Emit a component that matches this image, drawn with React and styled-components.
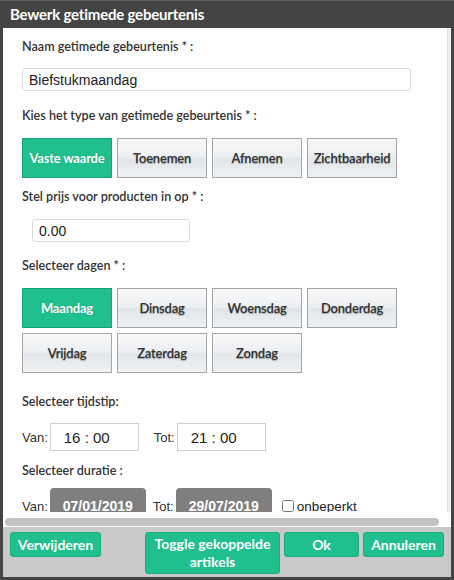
import React from "react";
import styled, { createGlobalStyle } from "styled-components";

const GlobalStyle = createGlobalStyle`
  html, body {
    margin: 0;
    padding: 0;
    background: #444;
  }
  * {
    box-sizing: border-box;
  }
`;

const typeOptions = ["Vaste waarde", "Toenemen", "Afnemen", "Zichtbaarheid"];
const dagen = ["Maandag", "Dinsdag", "Woensdag", "Donderdag", "Vrijdag", "Zaterdag", "Zondag"];

const App = () => {
  return (
    <>
      <GlobalStyle />
      <Dialog>
        <TitleBar>Bewerk getimede gebeurtenis</TitleBar>
        <Body>
          <ScrollRow>
            <Content>
              <Label $top={11}>Naam getimede gebeurtenis * :</Label>
              <TextInput $top={13} $width={389} defaultValue="Biefstukmaandag" />

              <Label $top={17}>Kies het type van getimede gebeurtenis * :</Label>
              <ButtonGrid $top={14}>
                {typeOptions.map((t, i) => (
                  <ToggleKnop key={t} $actief={i === 0}>
                    {t}
                  </ToggleKnop>
                ))}
              </ButtonGrid>

              <Label $top={11}>Stel prijs voor producten in op * :</Label>
              <TextInput $top={14} $width={158} $indent={10} defaultValue="0.00" />

              <Label $top={16}>Selecteer dagen * :</Label>
              <ButtonGrid $top={14}>
                {dagen.map((d, i) => (
                  <ToggleKnop key={d} $actief={i === 0}>
                    {d}
                  </ToggleKnop>
                ))}
              </ButtonGrid>

              <Label $top={21}>Selecteer tijdstip:</Label>
              <TijdRij $top={13}>
                <Klein>Van:</Klein>
                <TijdVeld>16 : 00</TijdVeld>
                <Klein $links={15}>Tot:</Klein>
                <TijdVeld>21 : 00</TijdVeld>
              </TijdRij>

              <Label $top={12}>Selecteer duratie :</Label>
              <DatumRij $top={9}>
                <Klein>Van:</Klein>
                <DatumKnop>07/01/2019</DatumKnop>
                <Klein $links={7}>Tot:</Klein>
                <DatumKnop>29/07/2019</DatumKnop>
                <CheckLabel>
                  <input type="checkbox" />
                  onbeperkt
                </CheckLabel>
              </DatumRij>
            </Content>
            <VTrack />
          </ScrollRow>
          <HTrack>
            <HThumb />
          </HTrack>
        </Body>
        <Footer>
          <GroeneKnop $breed={91}>Verwijderen</GroeneKnop>
          <RechtsGroep>
            <GroeneKnop $breed={135} $hoog={42}>
              Toggle gekoppelde artikels
            </GroeneKnop>
            <GroeneKnop $breed={75}>Ok</GroeneKnop>
            <GroeneKnop $breed={81}>Annuleren</GroeneKnop>
          </RechtsGroep>
        </Footer>
      </Dialog>
    </>
  );
};

export default App;

const Dialog = styled.div`
  width: 454px;
  height: 580px;
  background: #444;
  border-top: 1px solid #5a5a5a;
  padding: 0 3px 3px 3px;
  display: flex;
  flex-direction: column;
  font-family: Lato, "Liberation Sans", sans-serif;
`;

const TitleBar = styled.div`
  height: 27px;
  line-height: 26px;
  padding-left: 7px;
  color: #fff;
  font-weight: 700;
  font-size: 15px;
  letter-spacing: -0.2px;
`;

const Body = styled.div`
  flex: 1;
  min-height: 0;
  background: #fff;
  display: flex;
  flex-direction: column;
`;

const ScrollRow = styled.div`
  flex: 1;
  min-height: 0;
  display: flex;
`;

const Content = styled.div`
  flex: 1;
  overflow: hidden;
  padding: 0 0 0 19px;
  display: flex;
  flex-direction: column;
  align-items: flex-start;

  & > * {
    flex-shrink: 0;
  }
`;

const VTrack = styled.div`
  width: 4px;
  background: #eeeeee;
  border-left: 1px solid #dedede;
`;

const HTrack = styled.div`
  height: 15px;
  padding: 6px 12px 1px 2px;
  background: #fff;
`;

const HThumb = styled.div`
  height: 8px;
  border-radius: 4px;
  background: #c3c3c3;
`;

const Label = styled.div`
  margin-top: ${(p) => p.$top}px;
  height: 16px;
  line-height: 16px;
  font-size: 12.6px;
  font-weight: 600;
  color: #333;
  white-space: nowrap;
`;

const TextInput = styled.input`
  margin-top: ${(p) => p.$top}px;
  margin-left: ${(p) => p.$indent || 0}px;
  width: ${(p) => p.$width}px;
  height: 23px;
  border: 1px solid #dcdcdc;
  border-radius: 3px;
  padding: 0 6px;
  font-family: "Liberation Sans", Arial, sans-serif;
  font-size: 14px;
  color: #222;
  outline: none;
`;

const ButtonGrid = styled.div`
  margin-top: ${(p) => p.$top}px;
  display: grid;
  grid-template-columns: repeat(4, 90px);
  grid-auto-rows: 40px;
  gap: 5px;
`;

const ToggleKnop = styled.div`
  display: flex;
  align-items: center;
  justify-content: center;
  font-size: 13px;
  font-weight: 600;
  letter-spacing: -0.2px;
  white-space: nowrap;
  ${(p) =>
    p.$actief
      ? `
    background: #1fbf8e;
    border: 1px solid #16a477;
    color: #fff;
    font-weight: 700;
    text-shadow: 0 0 1px rgba(0, 0, 0, 0.25);
  `
      : `
    background: linear-gradient(#f7f8f9 0%, #eceff2 48%, #e2e6ea 52%, #eef1f3 100%);
    border: 1px solid #a6a6a6;
    color: #333;
    text-shadow: 0 1px 1px rgba(0, 0, 0, 0.3);
  `}
`;

const TijdRij = styled.div`
  margin-top: ${(p) => p.$top}px;
  display: flex;
  align-items: center;
  white-space: nowrap;
`;

const DatumRij = styled.div`
  margin-top: ${(p) => p.$top}px;
  display: flex;
  align-items: baseline;
  white-space: nowrap;
`;

const Klein = styled.span`
  font-family: "Liberation Sans", Arial, sans-serif;
  font-size: 13px;
  color: #333;
  margin-left: ${(p) => p.$links || 0}px;
  margin-right: 2px;
`;

const TijdVeld = styled.div`
  width: 89px;
  height: 28px;
  border: 1px solid #cfcfcf;
  display: flex;
  align-items: center;
  padding-left: 13px;
  font-family: "Liberation Sans", Arial, sans-serif;
  font-size: 15px;
  color: #222;
`;

const DatumKnop = styled.div`
  width: 96px;
  height: 34px;
  padding-top: 10px;
  border-radius: 4px 4px 0 0;
  background: #7f7f7f;
  color: #fff;
  text-align: center;
  font-family: "Liberation Sans", Arial, sans-serif;
  font-weight: 700;
  font-size: 14px;
`;

const CheckLabel = styled.label`
  margin-left: 10px;
  display: inline-flex;
  align-items: baseline;
  font-family: "Liberation Sans", Arial, sans-serif;
  font-size: 13.5px;
  color: #222;

  input {
    margin: 0 3px 0 0;
    width: 12px;
    height: 12px;
    position: relative;
    top: 1px;
  }
`;

const Footer = styled.div`
  height: 50px;
  background: #c9c9c9;
  display: flex;
  justify-content: space-between;
  align-items: flex-start;
  padding: 5px 7px 0 7px;
`;

const RechtsGroep = styled.div`
  display: flex;
  gap: 4px;
  align-items: flex-start;
`;

const GroeneKnop = styled.div`
  width: ${(p) => p.$breed}px;
  height: ${(p) => p.$hoog || 25}px;
  background: #1fbf8e;
  border: 1px solid #1aae80;
  border-radius: 3px;
  color: #fff;
  font-weight: 700;
  font-size: 14px;
  line-height: 18px;
  text-align: center;
  display: flex;
  align-items: center;
  justify-content: center;
  padding: 0 4px;
`;
